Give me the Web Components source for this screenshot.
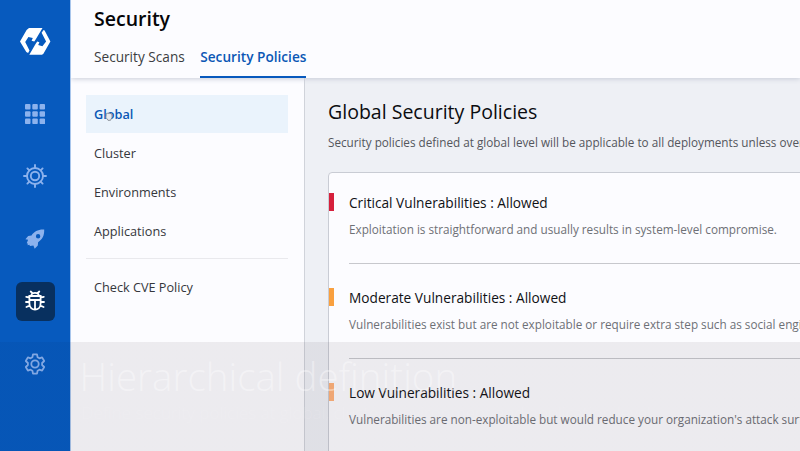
<!DOCTYPE html>
<html lang="en">
<head>
<meta charset="utf-8">
<title>Security</title>
<style>
html,body{margin:0;height:451px;width:800px;overflow:hidden;font-family:"Open Sans","Noto Sans",sans-serif;background:#fcfcff}
</style>
</head>
<body>
<security-app></security-app>
<script>
const define = (name, html) => customElements.define(name, class extends HTMLElement {
  constructor() {
    super();
    this.attachShadow({ mode: 'open' }).innerHTML = html;
  }
});

define('nav-icon', `<style>
:host{display:flex;align-items:center;justify-content:center;width:39px;height:39px;border-radius:6px;color:#8cb2ed}
:host([active]){background:#08305f;color:#fff}
</style><slot></slot>`);

define('side-rail', `<style>
:host{display:flex;flex-direction:column;align-items:center;width:71px;height:451px;background:#075abe;box-sizing:border-box;padding-top:25px;border-right:1px solid #a9c6ec;position:relative;z-index:2}
.logo{display:block;margin-bottom:36px}
nav{display:flex;flex-direction:column;gap:23.6px}
svg{display:block}
</style>
<svg class="logo" width="34" height="33" viewBox="0 0 34 33"><path fill="#fff" d="M11 3H24.5L17.8 14.2L16.3 16.6L13.6 15.8L14.8 13.1L10.4 11.9L7.2 17L11.5 25.6L10.1 28L8.3 26.9L2 16.5L8.6 5Z"/><path fill="#fff" d="M25.6 4.9L26.6 5.5L32.4 16.5L25.4 28.7L24 29.8H11.3L17.4 19.3L19.2 16.4L21.4 17.2L20.2 20L24.4 21.3L28.1 16.5L23.6 7.7Z"/></svg>
<nav>
<nav-icon><svg width="20" height="20" fill="currentColor"><rect width="5.5" height="5.5" rx="1"/><rect x="7.3" width="5.5" height="5.5" rx="1"/><rect x="14.6" width="5.5" height="5.5" rx="1"/><rect y="7.3" width="5.5" height="5.5" rx="1"/><rect x="7.3" y="7.3" width="5.5" height="5.5" rx="1"/><rect x="14.6" y="7.3" width="5.5" height="5.5" rx="1"/><rect y="14.6" width="5.5" height="5.5" rx="1"/><rect x="7.3" y="14.6" width="5.5" height="5.5" rx="1"/><rect x="14.6" y="14.6" width="5.5" height="5.5" rx="1"/></svg></nav-icon>
<nav-icon><svg width="24" height="24" viewBox="-12 -12 24 24" fill="none" stroke="currentColor" stroke-width="1.9" stroke-linecap="round"><circle r="8"/><circle r="4.2"/><path d="M0-8V-11M0 8V11M-8 0H-11M8 0H11M-5.7-5.7L-7.6-7.6M5.7-5.7L7.6-7.6M-5.7 5.7L-7.6 7.6M5.7 5.7L7.6 7.6"/></svg></nav-icon>
<nav-icon><svg width="20" height="20" viewBox="0 0 20 20" fill="currentColor"><path fill-rule="evenodd" d="M19.2.6C13 .3 9.2 2.5 6.5 6.5L3.2 7L.4 10.2L3.1 10.8L2.2 13L1.7 14.2L2.8 14.4L2.6 16.2L4.3 15.7L5 17.1L8.4 16.4L9.7 19.8L12.8 16.6L13.1 13.2C17.5 10.6 19.4 6.5 19.2.6ZM13.1 5.1a2.2 2.2 0 1 1 0 4.4a2.2 2.2 0 1 1 0-4.4Z"/></svg></nav-icon>
<nav-icon active><svg width="20" height="22" viewBox="0 0 20 22" fill="none" stroke="currentColor" stroke-width="1.8" stroke-linecap="round"><path d="M4.4 6H15.6V13.5C15.6 21.6 4.4 21.6 4.4 13.5ZM6.2 6C6.2 1.9 13.8 1.9 13.8 6M7.3 3L5.7 1.5M12.7 3L14.3 1.5M4.4 10H15.6M10 10V19M4.4 7.5L1.2 6.8M15.6 7.5L18.8 6.8M4.4 12H1M15.6 12H19M4.7 15.6L1.4 17M15.3 15.6L18.6 17"/></svg></nav-icon>
<nav-icon><svg width="22" height="22" viewBox="0 0 22 22" fill="none" stroke="currentColor" stroke-width="1.8" stroke-linejoin="round"><circle cx="11" cy="11" r="3.7"/><path d="M9 1.4H13L13.6 4.3L15.4 5.3L18.1 4.4L20.2 8L18.1 10V12L20.2 14L18.1 17.6L15.4 16.7L13.6 17.7L13 20.6H9L8.4 17.7L6.6 16.7L3.9 17.6L1.8 14L3.9 12V10L1.8 8L3.9 4.4L6.6 5.3L8.4 4.3Z"/></svg></nav-icon>
</nav>`);

define('page-header', `<style>
:host{display:block;height:78px;box-sizing:border-box;padding:5px 0 0 23px;background:#fcfcff;position:relative;z-index:1;box-shadow:0 1px 5px #c8ccd8}
h1{margin:0;font-size:19.5px;font-weight:600;line-height:27px;color:#050508}
.tabs{display:flex;gap:15.5px;margin-top:12px}
</style><h1>Security</h1><div class="tabs"><slot></slot></div>`);

define('tab-item', `<style>
:host{display:block;height:34px;box-sizing:border-box;font-size:13.65px;line-height:26px;color:#3b3d42;white-space:nowrap}
:host([active]){color:#0b57b5;font-weight:600;border-bottom:2px solid #0759bd}
</style><slot></slot>`);

define('side-menu', `<style>
:host{display:block;width:233.5px;flex:none;box-sizing:border-box;padding:17px 16px 0 15px;border-right:1px solid #d0d3da;background:#fcfcff}
</style><slot></slot>`);

define('menu-item', `<style>
:host{display:block;box-sizing:border-box;height:37.5px;margin-bottom:1.6px;padding-left:8px;font-size:12.7px;line-height:38px;color:#35373c}
:host([active]){background:#eaf3fc;color:#0b57b5;font-weight:600}
:host([separated]){margin-top:8px;padding-top:9px;border-top:1px solid #e9e9ed;height:48px}
</style><slot></slot>`);

define('policy-row', `<style>
:host{display:block;height:95px;box-sizing:border-box;padding-top:24px;position:relative;margin-left:20px;border-bottom:1px solid #c7c8cd}
:host([first]){height:91px;padding-top:20px}
:host::before{content:"";position:absolute;left:-20px;top:24px;width:5px;height:18px;background:var(--mark)}
:host([first])::before{top:20px}
h3{margin:0;font-size:13.68px;font-weight:400;line-height:19px;color:#101115;white-space:nowrap}
p{margin:9px 0 0;font-size:11.72px;line-height:17px;color:#6e7076;white-space:nowrap}
</style><h3><slot name="title"></slot></h3><p><slot></slot></p>`);

define('policy-panel', `<style>
:host{display:block;flex:1;min-width:0;padding:19.5px 0 0 23.5px;background:#eef0f5;overflow:hidden}
h2{margin:0;font-size:19.55px;font-weight:400;line-height:27px;color:#0b0c10;white-space:nowrap}
.lead{margin:9px 0 21px;font-size:11.72px;line-height:17px;color:#54565c;white-space:nowrap}
.card{width:600px;height:400px;border:1px solid #c9ccd4;border-radius:4px;background:#fcfcff;box-sizing:border-box}
</style><h2><slot name="title"></slot></h2><div class="lead"><slot name="lead"></slot></div><div class="card"><slot></slot></div>`);

define('caption-overlay', `<style>
:host{display:block;position:absolute;z-index:3;left:0;top:342px;width:800px;height:109px;box-sizing:border-box;padding:9px 0 0 79.5px;background:linear-gradient(90deg,rgba(0,38,95,.08) 0 70px,rgba(50,35,50,.08) 70px);color:rgba(255,255,255,.38);font-family:"Open Sans",sans-serif;font-weight:300;pointer-events:none}
.title{font-size:38.5px;line-height:50px;white-space:nowrap}
.detail{font-size:17px;line-height:24px;margin-left:2px;white-space:nowrap;color:rgba(255,255,255,.12)}
</style><div class="title"><slot></slot></div><div class="detail"><slot name="detail"></slot></div>`);

define('hand-pointer', `<style>
:host{display:block;position:absolute;left:105px;top:112px;width:8px;height:9px}svg{display:block}
</style><svg width="8" height="9"><path fill="#e6e9ee" stroke="#777d88" stroke-width=".8" d="M1.2 3.7V1.7Q2 .5 3 1.5Q4 .6 5 1.5Q6.8 1 7 3V5.3L5.5 8.3H3L.8 5.2Z"/></svg>`);

define('security-app', `<style>
:host{display:flex;position:relative;width:800px;height:451px;overflow:hidden}
main{flex:1;min-width:0;display:flex;flex-direction:column}
.body{display:flex;height:373px}
</style>
<side-rail></side-rail>
<main>
<page-header><tab-item>Security Scans</tab-item><tab-item active>Security Policies</tab-item></page-header>
<div class="body">
<side-menu><menu-item active>Global</menu-item><menu-item>Cluster</menu-item><menu-item>Environments</menu-item><menu-item>Applications</menu-item><menu-item separated>Check CVE Policy</menu-item></side-menu>
<policy-panel><span slot="title">Global Security Policies</span><span slot="lead">Security policies defined at global level will be applicable to all deployments unless overridden</span>
<policy-row first style="--mark:#d6203c"><span slot="title">Critical Vulnerabilities : Allowed</span>Exploitation is straightforward and usually results in system-level compromise.</policy-row>
<policy-row style="--mark:#f9a03f"><span slot="title">Moderate Vulnerabilities : Allowed</span>Vulnerabilities exist but are not exploitable or require extra step such as social engineering</policy-row>
<policy-row style="--mark:#ffb27a"><span slot="title">Low Vulnerabilities : Allowed</span>Vulnerabilities are non-exploitable but would reduce your organization's attack surface</policy-row>
</policy-panel>
</div>
</main>
<caption-overlay>Hierarchical definition<span slot="detail">Define security policies at global, cluster, environment and application level</span></caption-overlay>
<hand-pointer></hand-pointer>`);
</script>
</body>
</html>
